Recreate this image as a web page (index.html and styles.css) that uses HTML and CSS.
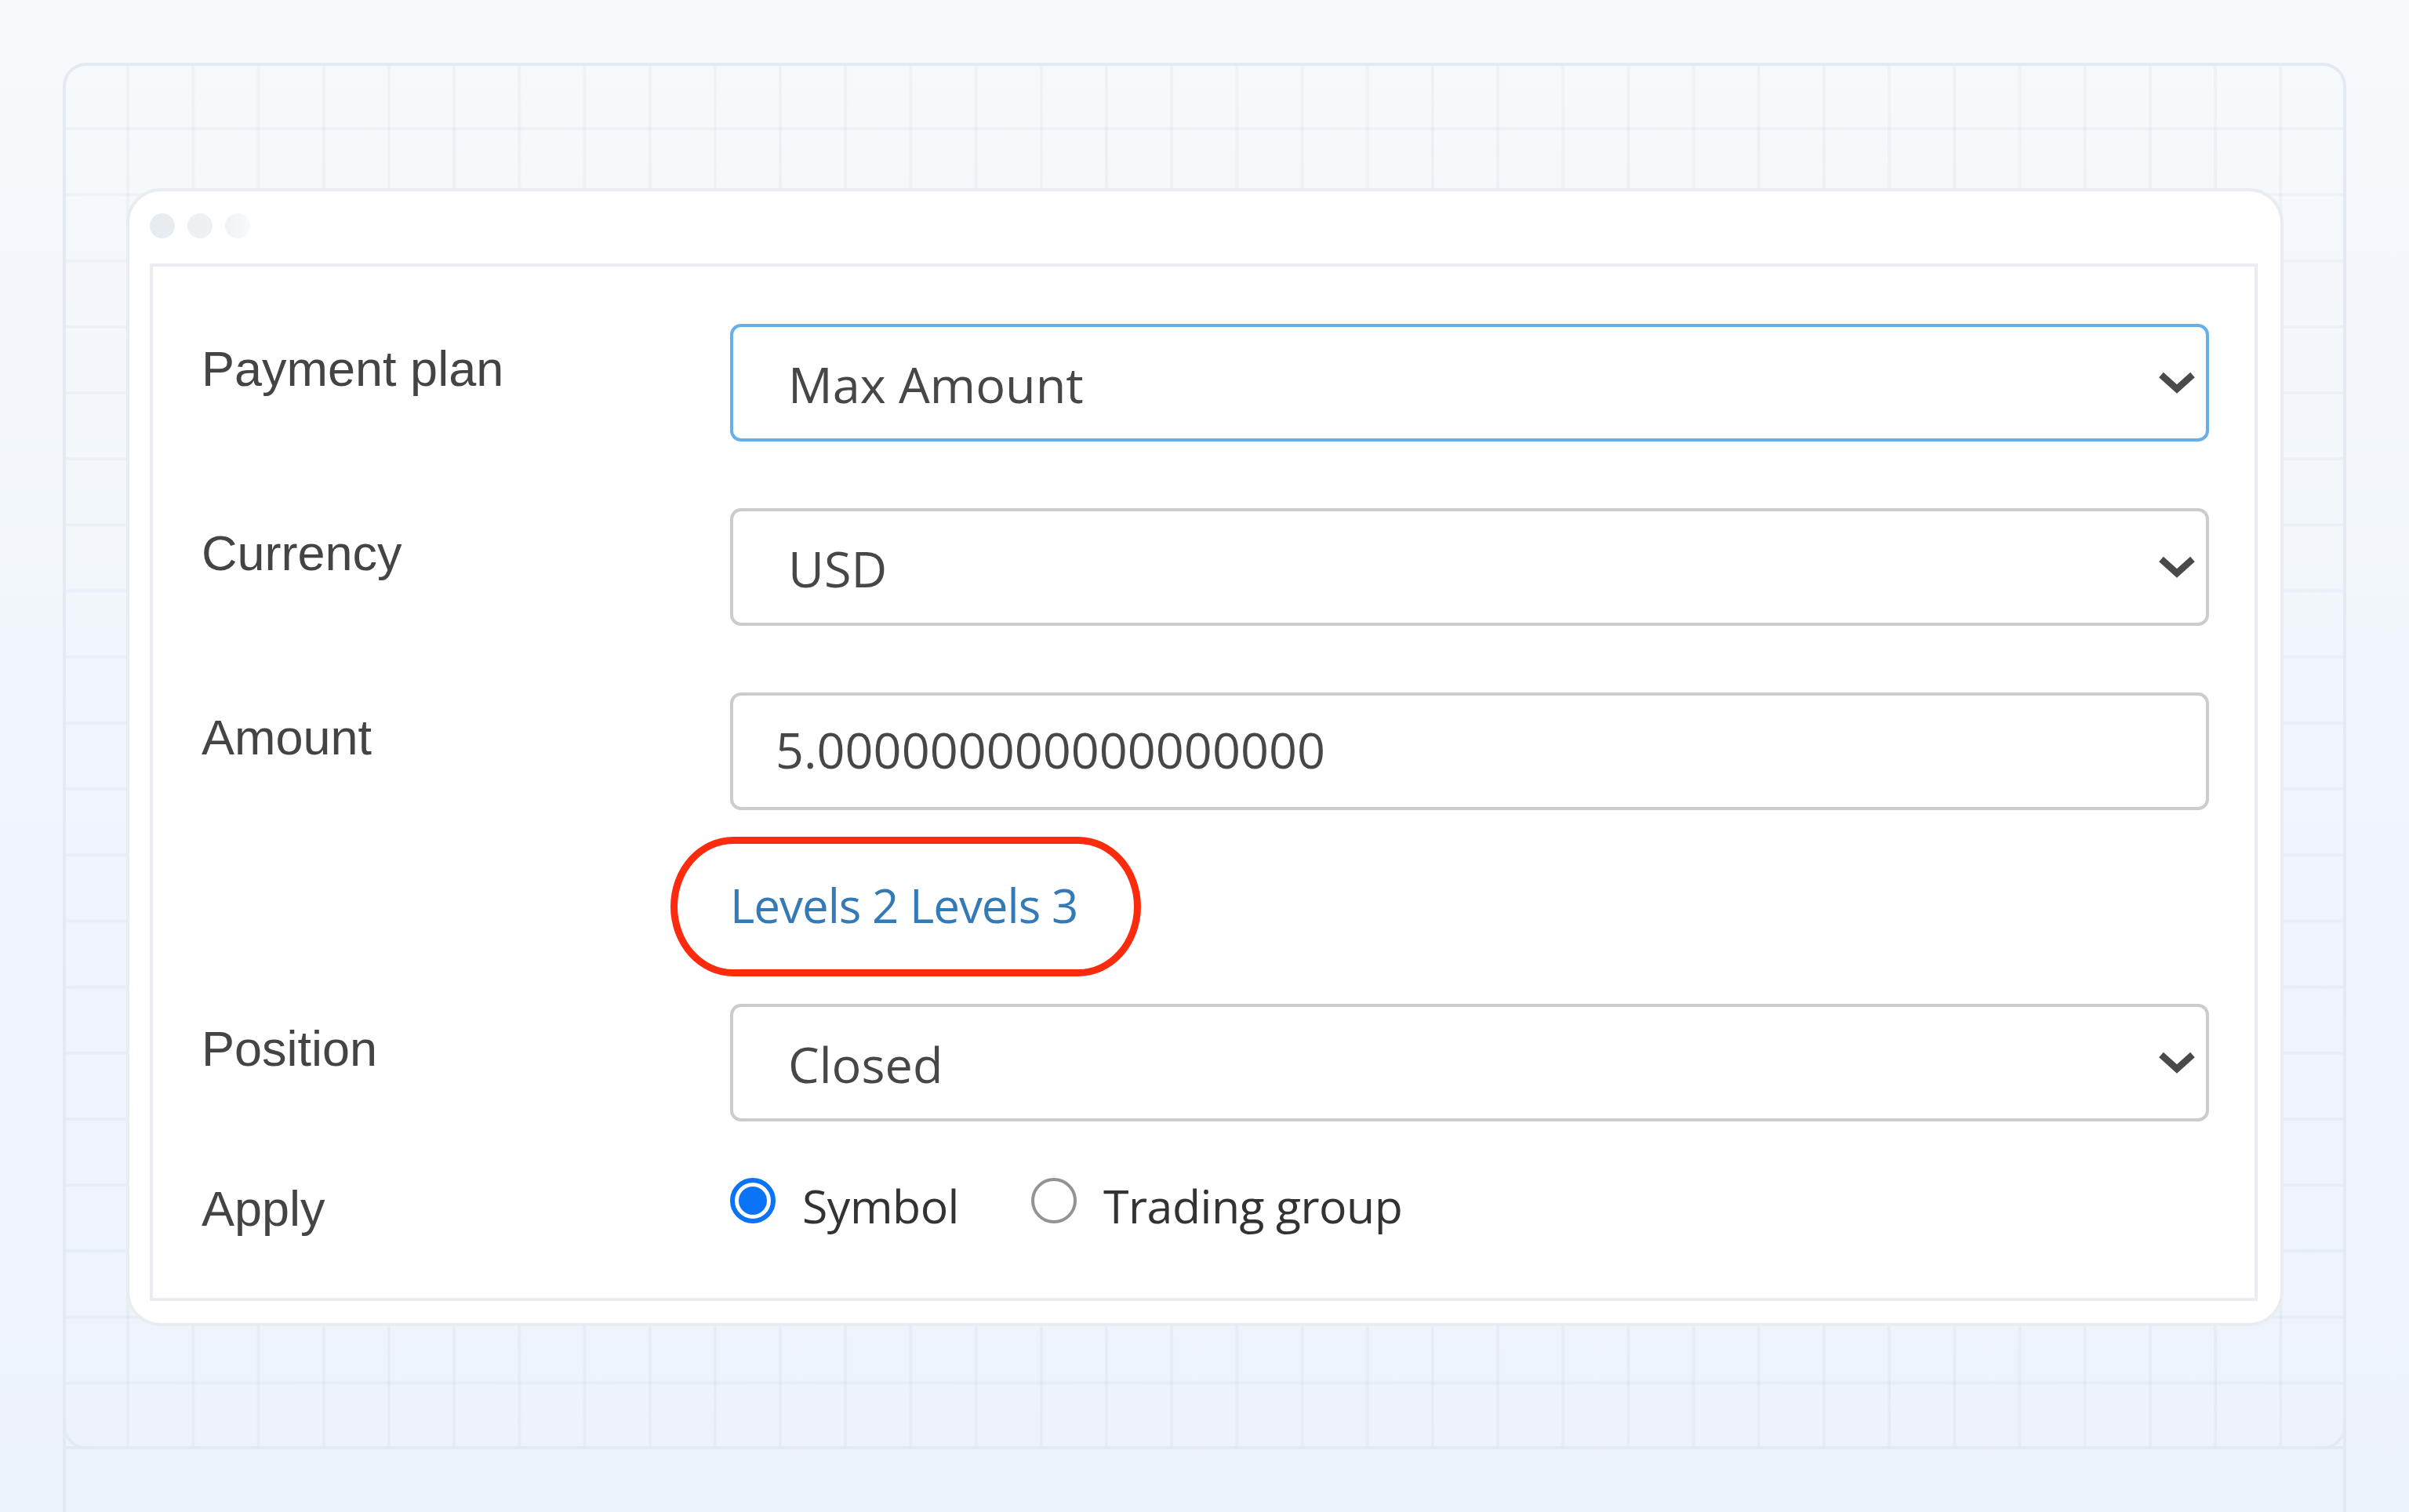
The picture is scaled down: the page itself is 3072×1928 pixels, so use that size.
FILE: index.html
```html
<!DOCTYPE html>
<html lang="en">
<head>
<meta charset="utf-8">
<title>Payment plan form</title>
<link rel="stylesheet" href="styles.css">
</head>
<body>
<div class="page">
  <div class="card">
    <div class="window">
      <div class="titlebar">
        <span class="dot d1"></span>
        <span class="dot d2"></span>
        <span class="dot d3"></span>
      </div>
      <div class="panel">
        <div class="form">
          <div class="row">
            <div class="lbl">Payment plan</div>
            <div class="ctl select focus">
              <span class="val">Max Amount</span>
              <svg class="chev" viewBox="0 0 46 28" width="46" height="28"><path d="M3 4 L23 22 L43 4" fill="none" stroke="#4a4a4a" stroke-width="8.5" stroke-linejoin="miter"/></svg>
            </div>
          </div>
          <div class="row gap">
            <div class="lbl">Currency</div>
            <div class="ctl select">
              <span class="val">USD</span>
              <svg class="chev" viewBox="0 0 46 28" width="46" height="28"><path d="M3 4 L23 22 L43 4" fill="none" stroke="#4a4a4a" stroke-width="8.5" stroke-linejoin="miter"/></svg>
            </div>
          </div>
          <div class="row gap">
            <div class="lbl">Amount</div>
            <div class="ctl input">
              <span class="val">5.000000000000000000</span>
            </div>
          </div>
          <div class="row linkrow">
            <div></div>
            <div class="links">
              <a class="link">Levels 2 Levels 3<span class="ring"></span></a>
            </div>
          </div>
          <div class="row">
            <div class="lbl">Position</div>
            <div class="ctl select">
              <span class="val">Closed</span>
              <svg class="chev" viewBox="0 0 46 28" width="46" height="28"><path d="M3 4 L23 22 L43 4" fill="none" stroke="#4a4a4a" stroke-width="8.5" stroke-linejoin="miter"/></svg>
            </div>
          </div>
          <div class="row applyrow">
            <div class="lbl">Apply</div>
            <div class="radios">
              <div class="opt">
                <span class="radio on"></span>
                <span class="rtext">Symbol</span>
              </div>
              <div class="opt">
                <span class="radio"></span>
                <span class="rtext">Trading group</span>
              </div>
            </div>
          </div>
        </div>
      </div>
    </div>
  </div>
  <div class="tail"></div>
</div>
</body>
</html>
```

FILE: styles.css
```css
html, body {
  margin: 0;
  padding: 0;
}

body {
  width: 3072px;
  height: 1928px;
  overflow: hidden;
  background: linear-gradient(180deg, #f6fafd 0%, #f1f6fc 45%, #edf3fb 100%);
  font-family: "Open Sans", "Noto Sans", sans-serif;
}

.page {
  box-sizing: border-box;
  height: 1928px;
  padding: 80px 80px 0 80px;
  display: flex;
  flex-direction: column;
}

/* outer grid card */
.card {
  position: relative;
  box-sizing: border-box;
  height: 1768px;
  border: 4px solid #e4eaf1;
  border-radius: 30px;
  padding: 156px 76px 153px 77px;
  background-image:
    linear-gradient(90deg, rgba(60, 80, 110, 0.042) 4px, transparent 4px),
    linear-gradient(180deg, rgba(60, 80, 110, 0.042) 4px, transparent 4px);
  background-size: 83.2px 84.2px;
  background-origin: border-box;
  background-position: -2px -2px;
}

.card::before,
.card::after {
  content: "";
  position: absolute;
  bottom: -4px;
  width: 34px;
  height: 34px;
  border-bottom: 4px solid #e3e9f0;
}

.card::before {
  left: -4px;
  border-left: 4px solid #e3e9f0;
}

.card::after {
  right: -4px;
  border-right: 4px solid #e3e9f0;
}

.tail {
  flex: 1;
  border-left: 4px solid #e3e9f0;
  border-right: 4px solid #e3e9f0;
}

/* browser-like window */
.window {
  box-sizing: border-box;
  height: 100%;
  background: #ffffff;
  border: 4px solid #eaecef;
  border-radius: 44px;
  display: flex;
  flex-direction: column;
}

.titlebar {
  display: flex;
  gap: 16px;
  padding: 28px 26px 32px 26px;
}

.dot {
  width: 32px;
  height: 32px;
  border-radius: 50%;
}

.d1 { background: #e8edf1; }
.d2 { background: #edf1f4; }
.d3 { background: linear-gradient(90deg, #eff3f5 0%, #f8fafb 100%); }

.panel {
  flex: 1;
  margin: 0 29px 28px 26px;
  border: 4px solid #eaecef;
  padding: 73px 58px 0 58px;
}

.form {
  display: flex;
  flex-direction: column;
}

.row {
  display: grid;
  grid-template-columns: 678px 1fr;
}

.row.gap {
  margin-top: 85px;
}

.lbl {
  font-family: "Liberation Sans", Arial, sans-serif;
  font-size: 63px;
  line-height: 72px;
  padding: 21px 0 0 4px;
  color: #444444;
}

.ctl {
  box-sizing: border-box;
  height: 150px;
  border: 4px solid #cccccc;
  border-radius: 14px;
  display: flex;
  align-items: center;
  font-size: 63px;
  line-height: 72px;
  color: #474747;
}

.select {
  padding: 4px 14px 0 70px;
}

.select.focus {
  border-color: #66afe9;
}

.input {
  padding: 0 20px 4px 54px;
}

.val {
  flex: 1;
  white-space: nowrap;
}

.chev {
  display: block;
  flex: none;
  margin-top: -4px;
}

/* link row */
.linkrow {
  height: 247px;
}

.links {
  padding-top: 90px;
}

.link {
  position: relative;
  display: inline-block;
  font-size: 60px;
  line-height: 62px;
  letter-spacing: -1px;
  color: #337ab7;
  white-space: nowrap;
}

.ring {
  position: absolute;
  left: -76px;
  top: -56px;
  width: 600px;
  height: 178px;
  box-sizing: border-box;
  border: 9px solid #fd2b0e;
  border-radius: 80px / 89px;
}

/* radios */
.applyrow {
  margin-top: 54px;
}

.radios {
  display: flex;
  align-items: flex-start;
  gap: 92px;
}

.opt {
  display: flex;
  align-items: flex-start;
  gap: 34px;
}

.radio {
  box-sizing: border-box;
  width: 58px;
  height: 58px;
  margin-top: 18px;
  border-radius: 50%;
  border: 4px solid #939393;
  background: #ffffff;
  display: flex;
  align-items: center;
  justify-content: center;
}

.radio.on {
  border: 6px solid #0b73f6;
}

.radio.on::after {
  content: "";
  width: 36px;
  height: 36px;
  border-radius: 50%;
  background: #0b73f6;
}

.rtext {
  margin-top: 17px;
  font-size: 59px;
  line-height: 72px;
  letter-spacing: -0.5px;
  color: #333333;
  white-space: nowrap;
}
```
